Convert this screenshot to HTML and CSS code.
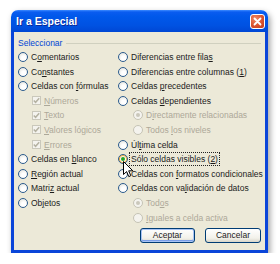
FILE: index.html
```html
<!doctype html>
<html>
<head>
  <meta charset="utf-8">
  <title>Ir a Especial</title>
  <link rel="stylesheet" href="styles.css">
</head>
<body>

  <div class="window">
    <div class="titlebar">
      <span class="title">Ir a Especial</span>
      <span class="close">
        <svg width="9" height="9" viewBox="0 0 9 9"><path d="M1.5 1.5 L7.5 7.5 M7.5 1.5 L1.5 7.5" stroke="#fff" stroke-width="1.8" stroke-linecap="round"/></svg>
      </span>
    </div>

    <div class="client">
      <div class="group-label"><span>Seleccionar</span></div>

      <div class="options">
        <div class="col">
          <div class="opt"><span class="radio"></span><span>C<u>o</u>mentarios</span></div>
          <div class="opt"><span class="radio"></span><span>Co<u>n</u>stantes</span></div>
          <div class="opt"><span class="radio"></span><span>Celdas con <u>f</u>órmulas</span></div>
          <div class="opt sub off"><span class="check"><svg width="7" height="7" viewBox="0 0 7 7"><path d="M0.8 3.4 L2.6 5.3 L6.2 1.2" fill="none" stroke="#b5b2a2" stroke-width="1.5"/></svg></span><span><u>N</u>úmeros</span></div>
          <div class="opt sub off"><span class="check"><svg width="7" height="7" viewBox="0 0 7 7"><path d="M0.8 3.4 L2.6 5.3 L6.2 1.2" fill="none" stroke="#b5b2a2" stroke-width="1.5"/></svg></span><span><u>T</u>exto</span></div>
          <div class="opt sub off"><span class="check"><svg width="7" height="7" viewBox="0 0 7 7"><path d="M0.8 3.4 L2.6 5.3 L6.2 1.2" fill="none" stroke="#b5b2a2" stroke-width="1.5"/></svg></span><span><u>V</u>alores lógicos</span></div>
          <div class="opt sub off"><span class="check"><svg width="7" height="7" viewBox="0 0 7 7"><path d="M0.8 3.4 L2.6 5.3 L6.2 1.2" fill="none" stroke="#b5b2a2" stroke-width="1.5"/></svg></span><span><u>E</u>rrores</span></div>
          <div class="opt"><span class="radio"></span><span>Celdas en <u>b</u>lanco</span></div>
          <div class="opt"><span class="radio"></span><span><u>R</u>egión actual</span></div>
          <div class="opt"><span class="radio"></span><span>Matri<u>z</u> actual</span></div>
          <div class="opt"><span class="radio"></span><span>Ob<u>j</u>etos</span></div>
        </div>

        <div class="col">
          <div class="opt"><span class="radio"></span><span>Diferencias entre fila<u>s</u></span></div>
          <div class="opt"><span class="radio"></span><span>Diferencias entre columnas (<u>1</u>)</span></div>
          <div class="opt"><span class="radio"></span><span>Celdas <u>p</u>recedentes</span></div>
          <div class="opt"><span class="radio"></span><span>Celdas <u>d</u>ependientes</span></div>
          <div class="opt sub off"><span class="radio on"></span><span>D<u>i</u>rectamente relacionadas</span></div>
          <div class="opt sub off"><span class="radio"></span><span>Todos <u>l</u>os niveles</span></div>
          <div class="opt"><span class="radio"></span><span>Úl<u>t</u>ima celda</span></div>
          <div class="opt"><span class="radio on hover"></span><span class="focus">Sólo celdas visibles (<u>2</u>)</span></div>
          <div class="opt"><span class="radio"></span><span>Celdas con <u>f</u>ormatos condicionales</span></div>
          <div class="opt"><span class="radio"></span><span>Celdas con va<u>l</u>idación de datos</span></div>
          <div class="opt sub off"><span class="radio on"></span><span>Tod<u>o</u>s</span></div>
          <div class="opt sub off"><span class="radio"></span><span><u>I</u>guales a celda activa</span></div>
        </div>
      </div>

      <div class="buttons">
        <button class="btn default">Aceptar</button>
        <button class="btn">Cancelar</button>
      </div>
    </div>

    <svg class="cursor" width="11" height="17" viewBox="0 0 11 17">
      <path d="M0.5 0.5 L0.5 13.5 L3.6 10.6 L5.8 15.6 L7.8 14.7 L5.7 9.8 L9.8 9.8 Z" fill="#fff" stroke="#000" stroke-width="1" stroke-linejoin="round"/>
    </svg>
  </div>

</body>
</html>
```

FILE: styles.css
```css
body {
  margin: 0;
  background: #fff;
  font-family: "Liberation Sans", Arial, sans-serif;
  font-size: 8.5px;
  color: #1b1b1b;
}
.window {
  position: relative;
  width: 257px;
  margin: 10px 0 0 11px;
  border-radius: 7px 7px 0 0;
  box-shadow: 2px 3px 6px rgba(0, 0, 0, 0.38);
}
.titlebar {
  height: 22px;
  display: flex;
  align-items: center;
  justify-content: space-between;
  padding: 0 3px 0 5px;
  border-radius: 7px 7px 0 0;
  background: linear-gradient(#3d8bff 0, #0a5cf0 2px, #0058ea 30%, #0052e2 70%, #0047d4 100%);
}
.title {
  color: #fff;
  font-weight: bold;
  font-size: 10.5px;
  text-shadow: 1px 1px 0 #0b2a9a;
}
.close {
  width: 15px;
  height: 15px;
  box-sizing: border-box;
  border: 1px solid #fff;
  border-radius: 3px;
  background: radial-gradient(circle at 35% 30%, #f08a66, #d9532f 55%, #c23a1b);
  display: flex;
  align-items: center;
  justify-content: center;
}
.client {
  box-sizing: border-box;
  height: 221px;
  border: 3px solid #0a45d9;
  border-top: 0;
  background: #ece9d8;
  padding: 6px 4px 0 4px;
}
.group-label {
  display: flex;
  align-items: center;
  gap: 4px;
  height: 10px;
  color: #0046d5;
}
.group-label::after {
  content: "";
  flex: 1;
  height: 1px;
  background: #d0d0bf;
}
.options {
  display: grid;
  grid-template-columns: 100px 1fr;
  margin-top: 1.7px;
}
.opt {
  height: 14.6px;
  display: flex;
  align-items: center;
  gap: 3px;
  white-space: nowrap;
}
.opt.sub {
  padding-left: 14px;
}
.col:last-child .opt.sub {
  padding-left: 15px;
}
.opt.off {
  color: #aca899;
}
.radio {
  width: 10px;
  height: 10px;
  box-sizing: border-box;
  border: 1px solid #2c5c8e;
  border-radius: 50%;
  background: radial-gradient(circle at 60% 65%, #fff 30%, #dcdcd4);
  display: flex;
  align-items: center;
  justify-content: center;
  flex: none;
}
.radio.on::after {
  content: "";
  width: 4px;
  height: 4px;
  border-radius: 50%;
  background: #26a326;
}
.radio.hover {
  box-shadow: inset 0 0 0 1px #f9b23b;
}
.off .radio {
  border-color: #c5c3b4;
  background: #f4f3ee;
}
.off .radio.on::after {
  background: #cac8bb;
}
.check {
  width: 9px;
  height: 9px;
  box-sizing: border-box;
  border: 1px solid #cac8bb;
  background: #f4f3ee;
  display: flex;
  align-items: center;
  justify-content: center;
  flex: none;
}
.focus {
  outline: 1px dotted #222;
  outline-offset: 1px;
}
.buttons {
  display: flex;
  justify-content: flex-end;
  gap: 10px;
  margin-top: 3px;
}
.btn {
  height: 15px;
  padding: 0;
  font: inherit;
  color: #1b1b1b;
  border: 1px solid #003c74;
  border-radius: 3px;
  background: linear-gradient(#fff, #f2f1ea 70%, #d8d5c8);
}
.btn.default {
  width: 55px;
  box-shadow: inset 0 0 0 1px #a9c4f5, inset 0 -1px 0 1px #7b9ee8;
}
.btn:last-child {
  width: 56px;
}
.cursor {
  position: absolute;
  left: 112px;
  top: 151px;
}
```
